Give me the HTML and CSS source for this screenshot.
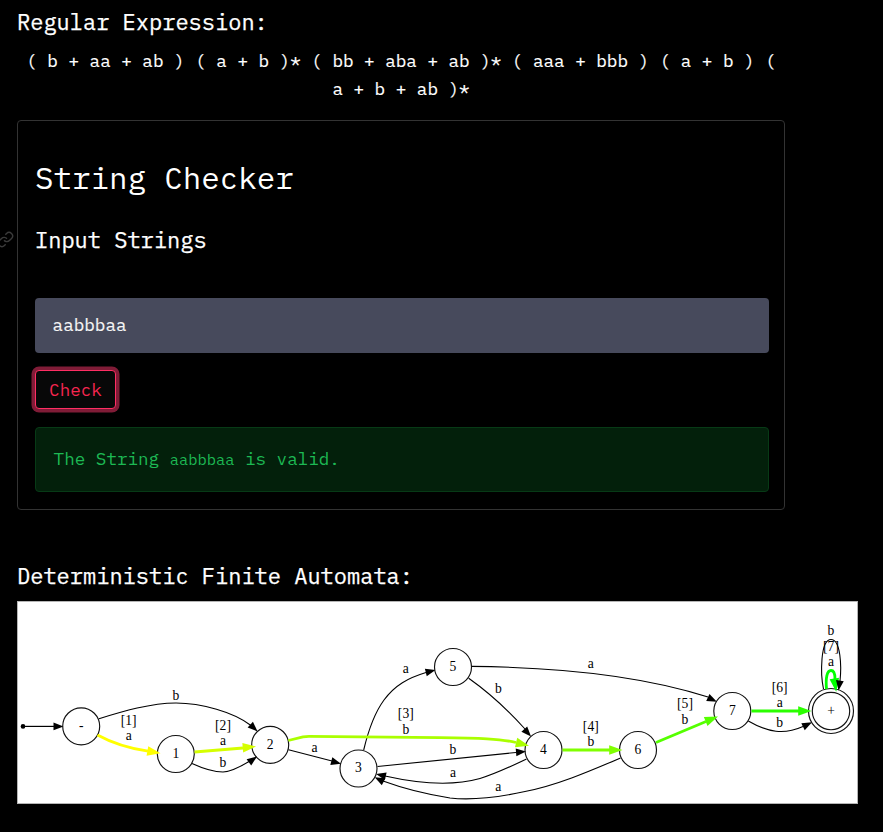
FILE: index.html
```html
<!DOCTYPE html>
<html lang="en">
<head>
<meta charset="utf-8">
<title>String Checker</title>
<link rel="stylesheet" href="styles.css">
</head>
<body>
<main class="page">
  <h4 class="heading">Regular Expression:</h4>
  <p class="regex">( b + aa + ab ) ( a + b )* ( bb + aba + ab )* ( aaa + bbb ) ( a + b ) ( a + b + ab )*</p>

  <section class="card">
    <h2 class="title">String Checker</h2>
    <div class="subrow">
      <svg class="anchor" viewBox="0 0 24 24" aria-hidden="true"><path d="M10 13a5 5 0 0 0 7.54.54l3-3a5 5 0 0 0-7.07-7.07l-1.72 1.71"/><path d="M14 11a5 5 0 0 0-7.54-.54l-3 3a5 5 0 0 0 7.07 7.07l1.71-1.71"/></svg>
      <h4 class="heading">Input Strings</h4>
    </div>
    <input class="field" type="text" value="aabbbaa" aria-label="Input string">
    <button class="check" type="button">Check</button>
    <div class="alert">The String <code>aabbbaa</code> is valid.</div>
  </section>

  <h4 class="heading graph-heading">Deterministic Finite Automata:</h4>
  <svg class="graph" viewBox="17 601 841 203">
    <defs>
      <path id="h" d="M0 0L-10-3.900V3.900Z"/>
      <path id="H" d="M0 0L-13.300-4.800V4.800Z"/>
    </defs>
    <g class="edge">
      <path d="M23 726.4H54" stroke-width="1.2"/>
      <path d="M99 718.7C124 711 150 703.2 176 703C201 703 234 712 251 725.5"/>
      <path d="M192 763.5C204 769 214 772 223 772C232 771.5 240 767 249 761.5"/>
      <path d="M288.5 749.7L332 761"/>
      <path d="M363.7 750C367 736 373 715 384 700C395 685 408 678 426 672.5"/>
      <path d="M377.5 766.5L516 752.5"/>
      <path d="M526.5 759C512 766 495 774 480 778.5C455 785.5 425 785 385 776"/>
      <path d="M620.5 758C590 771 558 785 525 791.5C495 798 472 800.5 450 798C425 794 402 788 383 781"/>
      <path d="M468.7 678.3C488 692 507 709 525 729"/>
      <path d="M471.5 666.4C540 667 630 672 708 697"/>
      <path d="M748.3 721C768 732.5 784 735 803 726.5"/>
      <path d="M823.5 689C820.500 675 820 639.500 831 639.500C841 639.500 841.500 667 840 681"/>
    </g>
    <g>
      <circle cx="23" cy="726.4" r="2.3"/>
      <use href="#h" transform="translate(63.500 726.4)"/>
      <use href="#h" transform="translate(257.6 731.500) rotate(43)"/>
      <use href="#h" transform="translate(257 756.5) rotate(-36)"/>
      <use href="#h" transform="translate(341 763.7) rotate(15)"/>
      <use href="#h" transform="translate(435.5 670) rotate(-14)"/>
      <use href="#h" transform="translate(526 751.5) rotate(-5)"/>
      <use href="#h" transform="translate(376 774) rotate(193)"/>
      <use href="#h" transform="translate(374.700 777.300) rotate(207)"/>
      <use href="#h" transform="translate(531 736.500) rotate(48)"/>
      <use href="#h" transform="translate(716.900 701.7) rotate(25)"/>
      <use href="#h" transform="translate(812 722.300) rotate(-26)"/>
    </g>
    <g class="node">
      <circle cx="81.200" cy="726.300" r="18.500"/><circle cx="175.800" cy="754" r="18.500"/><circle cx="270.200" cy="744.800" r="18.500"/>
      <circle cx="358.500" cy="768.500" r="18.500"/><circle cx="453" cy="667" r="18.500"/><circle cx="543.500" cy="750" r="18.500"/>
      <circle cx="638" cy="750" r="18.500"/><circle cx="732.300" cy="711" r="18.500"/>
      <circle cx="831" cy="711" r="18.700"/><circle cx="831" cy="711" r="22.500"/>
    </g>
    <g class="step s1"><path d="M97.500 735C112 743 127 748 148 751.2"/><use href="#H" transform="translate(160.500 753.300) rotate(10)"/></g>
    <g class="step s2"><path d="M194.500 752L243 748"/><use href="#H" transform="translate(256 746.500) rotate(-5)"/></g>
    <g class="step s3"><path d="M288.300 740.500L303 736.900Q306 736.300 309 736.300L440 737.700C480 738 500 738.700 516 742.500"/><use href="#H" transform="translate(529 745.7) rotate(14)"/></g>
    <g class="step s4"><path d="M562.500 750H610"/><use href="#H" transform="translate(622.500 750)"/></g>
    <g class="step s5"><path d="M656 742.500L706 721.500"/><use href="#H" transform="translate(718 716.500) rotate(-22)"/></g>
    <g class="step s6"><path d="M751.500 711H799"/><use href="#H" transform="translate(811.500 711)"/></g>
    <g class="step s7"><path d="M826.500 689C825.500 678 827 670.500 831 670.500C833.500 670.500 835 674 835 679"/><use href="#H" transform="translate(836.200 691.700) rotate(82)"/></g>
    <use href="#h" transform="translate(838.500 690.500) rotate(98)"/>
    <g class="label">
      <text x="81.200" y="730.300">-</text><text x="175.800" y="758">1</text><text x="270.200" y="748.800">2</text>
      <text x="358.500" y="772">3</text><text x="453" y="671">5</text><text x="543.500" y="754">4</text>
      <text x="638" y="754">6</text><text x="732.300" y="715">7</text><text x="831" y="715">+</text>
      <text x="176" y="700">b</text>
      <text x="128.700" y="725.300">[1]</text><text x="128.700" y="740">a</text>
      <text x="223" y="730.300">[2]</text><text x="223" y="745">a</text><text x="223" y="767">b</text>
      <text x="314.500" y="752">a</text><text x="405.800" y="673">a</text>
      <text x="405.800" y="718.300">[3]</text><text x="405.800" y="734">b</text>
      <text x="453" y="754">b</text><text x="453" y="777">a</text><text x="498.300" y="791">a</text>
      <text x="498.300" y="693">b</text><text x="590.800" y="668.300">a</text>
      <text x="590.800" y="731">[4]</text><text x="590.800" y="746">b</text>
      <text x="685" y="708">[5]</text><text x="685" y="724">b</text>
      <text x="779.700" y="692">[6]</text><text x="779.700" y="707">a</text><text x="779.700" y="727">b</text>
      <text x="831" y="635">b</text><text x="831" y="651">[7]</text><text x="831" y="666">a</text>
    </g>
    <rect class="frame" x="17.500" y="601.500" width="840" height="202"/>
  </svg>
</main>
</body>
</html>
```

FILE: styles.css
```css
* { box-sizing: border-box; }
body {
  margin: 0;
  background: #000;
  color: #fff;
  font: 17.6px/28px "IBM Plex Mono", "Liberation Mono", monospace;
}
.page { padding: 7px 17px 0; }
.heading, .title { margin: 0; font-weight: 400; }
.heading { font-size: 22px; line-height: 30px; -webkit-text-stroke: 0.25px currentColor; }
.regex { width: 768px; margin: 10px 0 0; text-align: center; -webkit-text-stroke: 0.15px currentColor; }
.card {
  width: 768px;
  height: 390px;
  margin-top: 17px;
  padding: 36px 15px 17px 17px;
  border: 1px solid #333;
  border-radius: 4px;
}
.title { font-size: 30.8px; line-height: 40px; }
.subrow { display: flex; align-items: center; margin: 28px 0 43px -38px; }
.anchor {
  width: 17px;
  height: 17px;
  margin: -2px 21px 0 0;
  fill: none;
  stroke: #3b3b3b;
  stroke-width: 2;
}
.field {
  display: block;
  width: 734px;
  height: 55px;
  padding: 0 17.6px 2px;
  border: 0;
  border-radius: 4px;
  background: #474a5c;
  color: #f5f5f5;
  font: inherit;
  -webkit-text-stroke: 0.15px currentColor;
}
.check {
  display: block;
  width: 81px;
  height: 39px;
  margin-top: 17px;
  padding: 0;
  border: 1px solid #ff2e63;
  border-radius: 4px;
  background: #080808;
  box-shadow: 0 0 0 3.5px #801c37;
  color: #f62650;
  font: inherit;
}
.alert {
  width: 734px;
  height: 65px;
  margin-top: 18px;
  padding: 17px 17.6px;
  border: 1px solid #073a16;
  border-radius: 4px;
  background: #03200b;
  color: #1db954;
}
.alert code { font-family: inherit; font-size: 15.4px; }
.graph-heading { margin-top: 51px; }
.graph { display: block; width: 841px; height: 203px; margin-top: 10px; background: #fff; }
.frame { fill: none; stroke: #b5b5b5; stroke-width: 1; }
.edge { fill: none; stroke: #000; stroke-width: 1.1; }
.node { fill: none; stroke: #111; stroke-width: 1.15; }
.step path { fill: none; stroke: currentColor; stroke-width: 2.8; }
.step use { fill: currentColor; }
.s1 { color: #ff0; }
.s2 { color: #d5ff00; }
.s3 { color: #af0; }
.s4 { color: #80ff00; }
.s5 { color: #5f0; }
.s6 { color: #2bff00; }
.s7 { color: #0f0; }
.label { font: 13.6px "Liberation Serif", serif; text-anchor: middle; }
```
